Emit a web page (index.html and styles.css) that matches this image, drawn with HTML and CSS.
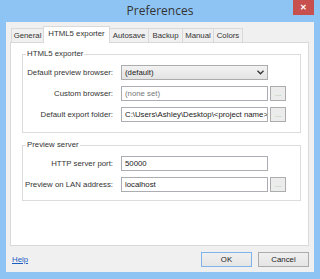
FILE: index.html
```html
<!doctype html>
<html lang="en">
  <head>
    <meta charset="UTF-8" />
    <title>Preferences</title>
    <link rel="stylesheet" href="styles.css">
  </head>
  <body>
    <div class="window">
      <div class="titlebar">
        <span></span>
        <span class="title">Preferences</span>
        <span class="close-wrap"><span class="close">&#x2715;</span></span>
      </div>
      <div class="client">
        <div class="tabs">
          <span class="tab">General</span>
          <span class="tab active">HTML5 exporter</span>
          <span class="tab">Autosave</span>
          <span class="tab">Backup</span>
          <span class="tab">Manual</span>
          <span class="tab">Colors</span>
        </div>
        <div class="panel">
          <fieldset class="group">
            <legend>HTML5 exporter</legend>
            <div class="row">
              <label>Default preview browser:</label>
              <div class="select">(default)<span class="arrow"><svg width="7" height="5" viewBox="0 0 7 5"><path d="M0.5 0.8 L3.5 3.8 L6.5 0.8" fill="none" stroke="#333" stroke-width="1.3"/></svg></span></div>
            </div>
            <div class="row">
              <label>Custom browser:</label>
              <div class="input muted">(none set)</div>
              <button class="dots">...</button>
            </div>
            <div class="row">
              <label>Default export folder:</label>
              <div class="input">C:\Users\Ashley\Desktop\&lt;project name&gt;</div>
              <button class="dots">...</button>
            </div>
          </fieldset>
          <fieldset class="group second">
            <legend>Preview server</legend>
            <div class="row">
              <label>HTTP server port:</label>
              <div class="input">50000</div>
            </div>
            <div class="row">
              <label>Preview on LAN address:</label>
              <div class="input">localhost</div>
              <button class="dots">...</button>
            </div>
          </fieldset>
        </div>
        <div class="footer">
          <a class="help" href="#">Help</a>
          <span class="spacer"></span>
          <button class="btn default">OK</button>
          <button class="btn">Cancel</button>
        </div>
      </div>
    </div>
  </body>
</html>
```

FILE: styles.css
```css
body {
  margin: 0;
  background: #8ec4f4;
  font-family: "Liberation Sans", Arial, sans-serif;
  font-size: 7.8px;
  color: #333;
}
.window {
  width: 320px;
  height: 279px;
  box-sizing: border-box;
  background: #8ec4f4;
  padding: 0 6px;
}
.titlebar {
  height: 22px;
  display: grid;
  grid-template-columns: 1fr auto 1fr;
  margin: 0 -6px;
}
.title {
  font-size: 12px;
  line-height: 22px;
  color: #333;
  font-family: "Open Sans", sans-serif;
}
.close-wrap {
  display: flex;
  justify-content: flex-end;
  padding-right: 6px;
}
.close {
  width: 21px;
  height: 15px;
  background: #c7504f;
  color: white;
  font-size: 8px;
  font-weight: bold;
  text-align: center;
  line-height: 15px;
}
.client {
  height: 250px;
  background: #f0f0f0;
  padding: 4px 5px 0 4px;
  box-sizing: border-box;
}
.tabs {
  display: flex;
  align-items: flex-end;
  height: 16px;
  padding-left: 1px;
}
.tab {
  height: 14px;
  line-height: 13px;
  padding: 0;
  text-align: center;
  white-space: nowrap;
  border: 1px solid #d9d9d9;
  border-bottom: none;
  background: #f0f0f0;
  box-sizing: border-box;
  margin-right: -1px;
}
.tabs .tab:nth-child(1) { width: 33px; }
.tabs .tab:nth-child(2) { width: 67px; }
.tabs .tab:nth-child(3) { width: 40px; }
.tabs .tab:nth-child(4) { width: 35px; }
.tabs .tab:nth-child(5) { width: 32px; }
.tabs .tab:nth-child(6) { width: 30px; }
.tab.active {
  height: 17px;
  background: white;
  line-height: 14px;
  position: relative;
  z-index: 1;
  margin-bottom: -1px;
}
.panel {
  height: 204px;
  background: white;
  border: 1px solid #d9d9d9;
  box-sizing: border-box;
  padding: 6px 8px 0 11px;
}
.group {
  margin: 0;
  padding: 0 5px 10px 0;
  border: 1px solid #dcdcdc;
  width: 279px;
  box-sizing: border-box;
}
.group.second {
  margin-top: 7px;
  padding-bottom: 8px;
}
.group legend {
  padding: 0 1px;
  margin-left: 3px;
  line-height: 10px;
}
.row {
  display: grid;
  grid-template-columns: 98px 147px 18px;
  height: 15px;
  margin-top: 6px;
  align-items: center;
}
.row label {
  text-align: right;
  padding-right: 8px;
  white-space: nowrap;
}
.input,
.select {
  height: 15px;
  box-sizing: border-box;
  border: 1px solid #abadb3;
  background: white;
  padding: 0 3px;
  line-height: 13px;
  white-space: nowrap;
  overflow: hidden;
  color: #222;
}
.select {
  background: linear-gradient(#f2f2f2, #e3e3e3);
  border-color: #acacac;
  display: flex;
  justify-content: space-between;
  align-items: center;
}
.arrow {
  display: flex;
}
.muted {
  color: #777;
}
.dots {
  margin-left: 2px;
  height: 15px;
  padding: 0;
  border: 1px solid #acacac;
  background: #ececec;
  color: #8fbf9f;
  font-size: 8px;
  line-height: 10px;
  font-family: inherit;
}
.footer {
  display: flex;
  align-items: center;
  height: 26px;
  padding: 0 0 0 2px;
}
.help {
  color: #1a5fc0;
  text-decoration: underline;
}
.spacer {
  flex: 1;
}
.btn {
  width: 51px;
  height: 15px;
  margin-left: 6px;
  padding: 0;
  border: 1px solid #acacac;
  background: linear-gradient(#f0f0f0, #e5e5e5);
  font-family: inherit;
  font-size: 7.8px;
  color: #222;
}
.btn.default {
  border-color: #7eb4ea;
}
```
